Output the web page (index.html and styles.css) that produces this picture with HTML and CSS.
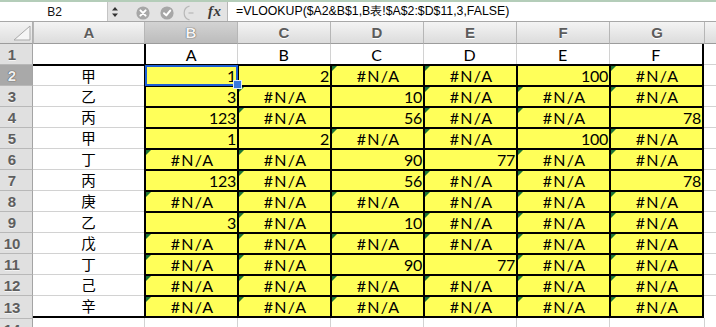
FILE: index.html
```html
<!DOCTYPE html>
<html>
<head>
<meta charset="utf-8">
<link rel="stylesheet" href="styles.css">
</head>
<body>
<div class="toolbar">
  <div class="namebox">B2</div>
  <div class="stepper">
    <svg width="6" height="12" viewBox="0 0 6 12"><path d="M3 1 L6 4.5 H0 Z M3 11 L6 7.5 H0 Z" fill="#333"/></svg>
  </div>
  <div class="tools">
    <svg class="tool-icons" width="82" height="19" viewBox="0 0 82 19">
      <circle cx="21" cy="11" r="6.6" fill="#a7a7a7"/>
      <path d="M18.4 8.4 L23.6 13.6 M23.6 8.4 L18.4 13.6" stroke="#fff" stroke-width="2" stroke-linecap="round"/>
      <circle cx="45" cy="11" r="6.6" fill="#a7a7a7"/>
      <path d="M42 11.2 L44.3 13.4 L48.2 8.6" stroke="#fff" stroke-width="2" fill="none" stroke-linecap="round" stroke-linejoin="round"/>
      <path d="M67.5 4.2 A7 7 0 0 0 67.5 17.8" stroke="#b8b8b8" stroke-width="1.2" fill="none"/>
      <path d="M66.5 11 H71.5" stroke="#c9c9c9" stroke-width="2"/>
    </svg>
    <span class="fx">fx</span>
  </div>
  <div class="formula">=VLOOKUP($A2&amp;B$1,B表!$A$2:$D$11,3,FALSE)</div>
</div>

<div class="sheet">
  <div class="corner"><svg width="18" height="16" viewBox="0 0 18 16"><path d="M17 1 V15 H1 Z" fill="#f6f6f6" stroke="#a9a9a9" stroke-width="1"/></svg></div>
  <div class="ch">A</div><div class="ch ch-sel">B</div><div class="ch">C</div><div class="ch">D</div><div class="ch">E</div><div class="ch">F</div><div class="ch">G</div><div class="ch"></div>

  <div class="rh rh-first">1</div><div class="a a-first"></div>
  <div class="t t-b">A</div><div class="t">B</div><div class="t">C</div><div class="t">D</div><div class="t">E</div><div class="t t-g">F</div><div class="h h-first"></div>

  <div class="rh rh-sel">2</div><div class="a a-top">甲</div>
  <div class="d num sel">1</div><div class="d num">2</div><div class="d err">#N/A</div><div class="d err">#N/A</div><div class="d num">100</div><div class="d err g">#N/A</div><div class="h"></div>

  <div class="rh">3</div><div class="a">乙</div>
  <div class="d num">3</div><div class="d err">#N/A</div><div class="d num">10</div><div class="d err">#N/A</div><div class="d err">#N/A</div><div class="d err g">#N/A</div><div class="h"></div>

  <div class="rh">4</div><div class="a">丙</div>
  <div class="d num">123</div><div class="d err">#N/A</div><div class="d num">56</div><div class="d err">#N/A</div><div class="d err">#N/A</div><div class="d num g">78</div><div class="h"></div>

  <div class="rh">5</div><div class="a">甲</div>
  <div class="d num">1</div><div class="d num">2</div><div class="d err">#N/A</div><div class="d err">#N/A</div><div class="d num">100</div><div class="d err g">#N/A</div><div class="h"></div>

  <div class="rh">6</div><div class="a">丁</div>
  <div class="d err">#N/A</div><div class="d err">#N/A</div><div class="d num">90</div><div class="d num">77</div><div class="d err">#N/A</div><div class="d err g">#N/A</div><div class="h"></div>

  <div class="rh">7</div><div class="a">丙</div>
  <div class="d num">123</div><div class="d err">#N/A</div><div class="d num">56</div><div class="d err">#N/A</div><div class="d err">#N/A</div><div class="d num g">78</div><div class="h"></div>

  <div class="rh">8</div><div class="a">庚</div>
  <div class="d err">#N/A</div><div class="d err">#N/A</div><div class="d err">#N/A</div><div class="d err">#N/A</div><div class="d err">#N/A</div><div class="d err g">#N/A</div><div class="h"></div>

  <div class="rh">9</div><div class="a">乙</div>
  <div class="d num">3</div><div class="d err">#N/A</div><div class="d num">10</div><div class="d err">#N/A</div><div class="d err">#N/A</div><div class="d err g">#N/A</div><div class="h"></div>

  <div class="rh">10</div><div class="a">戊</div>
  <div class="d err">#N/A</div><div class="d err">#N/A</div><div class="d err">#N/A</div><div class="d err">#N/A</div><div class="d err">#N/A</div><div class="d err g">#N/A</div><div class="h"></div>

  <div class="rh">11</div><div class="a">丁</div>
  <div class="d err">#N/A</div><div class="d err">#N/A</div><div class="d num">90</div><div class="d num">77</div><div class="d err">#N/A</div><div class="d err g">#N/A</div><div class="h"></div>

  <div class="rh">12</div><div class="a">己</div>
  <div class="d err">#N/A</div><div class="d err">#N/A</div><div class="d err">#N/A</div><div class="d err">#N/A</div><div class="d err">#N/A</div><div class="d err g">#N/A</div><div class="h"></div>

  <div class="rh">13</div><div class="a a-bot">辛</div>
  <div class="d err bot">#N/A</div><div class="d err bot">#N/A</div><div class="d err bot">#N/A</div><div class="d err bot">#N/A</div><div class="d err bot">#N/A</div><div class="d err g bot">#N/A</div><div class="h"></div>

  <div class="rh">14</div><div class="a a-after"></div>
  <div class="e"></div><div class="e"></div><div class="e"></div><div class="e"></div><div class="e"></div><div class="e"></div><div class="e h-end"></div>
</div>
</body>
</html>
```

FILE: styles.css
```css
* { box-sizing: border-box; }

html, body {
  margin: 0;
  padding: 0;
  width: 716px;
  height: 327px;
  overflow: hidden;
  background: #fff;
  font-family: "Liberation Sans", Arial, sans-serif;
}

/* ---------- formula toolbar ---------- */
.toolbar {
  display: flex;
  height: 22px;
  border-top: 2px solid #b4cdb9;
  border-bottom: 1px solid #a8a8a8;
  background: #e3e3e3;
}

.namebox {
  width: 108px;
  background: #fff;
  display: flex;
  align-items: center;
  justify-content: center;
  padding-left: 2px;
  font-size: 12px;
  color: #111;
  border-right: 1px solid #c4c4c4;
}

.stepper {
  width: 14px;
  display: flex;
  align-items: center;
  justify-content: center;
}

.tools {
  width: 105px;
  display: flex;
  align-items: center;
}

.tool-icons { display: block; }

.fx {
  font-family: "Liberation Serif", "Times New Roman", serif;
  font-style: italic;
  font-weight: bold;
  font-size: 15px;
  color: #3a3a3a;
  margin-left: 4px;
  letter-spacing: 0.5px;
}

.formula {
  flex: 1;
  background: #fff;
  border-left: 1px solid #b7b7b7;
  padding-left: 8px;
  display: flex;
  align-items: center;
  font-size: 12.3px;
  color: #000;
  white-space: nowrap;
}

/* ---------- sheet grid ---------- */
.sheet {
  display: grid;
  grid-template-columns: 33px 111px 93px 93px 93px 93px 93px 95px 1fr;
  grid-template-rows: 22px 20px repeat(11, 21px) 23px 21px;
}

.corner {
  background: linear-gradient(#f4f4f4, #dedede);
  border-bottom: 1px solid #9c9c9c;
  border-right: 1px solid #b0b0b0;
  display: flex;
  align-items: flex-end;
  justify-content: flex-end;
  padding: 0 1px 2px 0;
}
.corner svg { display: block; }

.ch {
  background: linear-gradient(#f4f4f4, #dcdcdc);
  border-left: 1px solid #b6b6b6;
  border-bottom: 1px solid #9c9c9c;
  display: flex;
  align-items: center;
  justify-content: center;
  font-weight: bold;
  font-size: 15px;
  color: #5c5c5c;
  text-shadow: 0 1px 0 #fff;
}
.ch-sel {
  background: linear-gradient(#d3d3d3, #bcbcbc);
  color: #f4f4f4;
  text-shadow: 0 0 1px #555, 0 0 1px #555;
}

.rh {
  background: #e0e0e0;
  border-top: 1px solid #b8b8b8;
  border-right: 1px solid #a4a4a4;
  display: flex;
  align-items: center;
  justify-content: center;
  padding-right: 8px;
  font-weight: bold;
  font-size: 15px;
  color: #5e5e5e;
  text-shadow: 0 1px 0 #f4f4f4;
}
.rh-first { border-top: none; }
.rh-sel {
  background: #a9a9a9;
  color: #f0f0f0;
  text-shadow: 0 0 1px #444, 0 0 1px #444;
}

/* column A */
.a {
  border-top: 1px solid #d2d2d2;
  display: flex;
  align-items: center;
  justify-content: center;
  font-family: "Noto Sans CJK SC", "Noto Sans CJK JP", sans-serif;
  font-size: 14.5px;
  line-height: 1;
  color: #000;
  padding-top: 1px;
}
.a-first { border-top: none; }
.a-top { border-top: 2px solid #000; }
.a-bot { border-bottom: 2px solid #000; }
.a-after { border-top: none; }

/* row 1 titles */
.t {
  border-left: 1px solid #d2d2d2;
  display: flex;
  align-items: flex-end;
  justify-content: center;
  font-family: Lato, "DejaVu Sans", sans-serif;
  font-size: 16px;
  line-height: 19px;
  color: #000;
  letter-spacing: 0.6px;
}
.t-b { border-left: 2px solid #000; }
.t-g { border-right: 2px solid #000; }

/* data cells */
.d {
  position: relative;
  background: #ffff59;
  border-top: 2px solid #000;
  border-left: 2px solid #000;
  display: flex;
  align-items: flex-end;
  font-family: Lato, "DejaVu Sans", sans-serif;
  font-size: 16px;
  line-height: 18px;
  color: #000;
  padding: 0 1px 0 3px;
}
.d.g { border-right: 2px solid #000; }
.d.bot { border-bottom: 2px solid #000; }
.num { justify-content: flex-end; letter-spacing: -0.3px; }
.err { justify-content: center; letter-spacing: 1.2px; }
.err::before {
  content: "";
  position: absolute;
  left: 0;
  top: 0;
  border-top: 5px solid #1c7434;
  border-right: 5px solid transparent;
}

.sel { z-index: 2; }
.sel::before {
  content: "";
  position: absolute;
  left: -1px;
  top: -1px;
  right: -1px;
  bottom: -1px;
  border: 2px solid #1d5fd4;
}
.sel::after {
  content: "";
  position: absolute;
  right: -5px;
  bottom: -4px;
  width: 7px;
  height: 7px;
  background: #3a78dc;
  border: 1px solid #dfe9f7;
}

/* column H and row 14 */
.h { border-top: 1px solid #d2d2d2; }
.h-first { border-top: none; }
.e { border-left: 1px solid #d2d2d2; }
.e.h-end { border-left: 1px solid #d2d2d2; }
```
